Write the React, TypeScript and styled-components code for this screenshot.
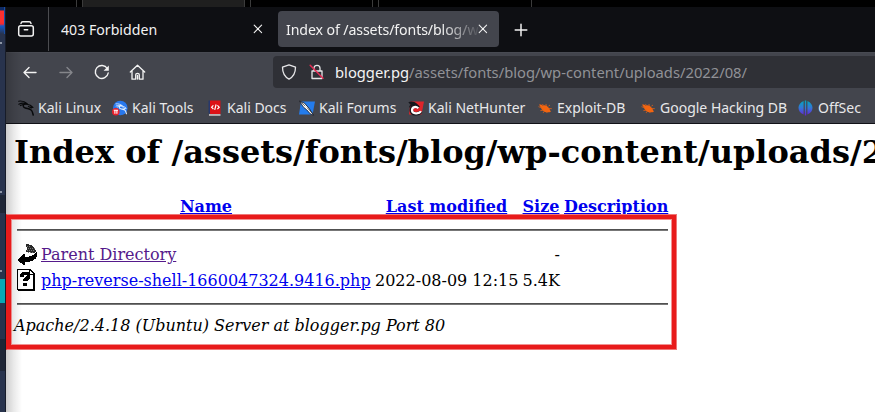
import React from "react";
import styled, { createGlobalStyle } from "styled-components";

const GlobalStyle = createGlobalStyle`
  * { box-sizing: border-box; }
  html, body { margin: 0; padding: 0; overflow: hidden; background: #000; }
`;

const Desktop = styled.div`
  width: 875px;
  height: 412px;
  display: grid;
  grid-template-rows: 7px 405px;
  overflow: hidden;
  background: #000;
`;

const Panel = styled.div`
  display: flex;
  background: #000;
`;

const PanelCell = styled.div<{ $w: number; $active?: boolean }>`
  width: ${(p) => p.$w}px;
  flex: none;
  border-right: 1px solid #3b3b3b;
  background: ${(p) => (p.$active ? "#1f1f1f" : "#000")};
`;

const Workspace = styled.div`
  display: grid;
  grid-template-columns: 6px 869px;
  min-height: 0;
`;

const Behind = styled.div`
  display: flex;
  flex-direction: column;
  background: #28334d;
  border-right: 1px solid #171c29;
  overflow: hidden;
`;

const Strip = styled.div<{ $h: number; $c?: string }>`
  height: ${(p) => p.$h}px;
  flex: none;
  background: ${(p) => p.$c ?? "transparent"};
`;

const RedGlow = styled.div`
  height: 27px;
  flex: none;
  border-right: 4px solid #164fa8;
  border-right-width: 1px;
  background: linear-gradient(#102a63 0 3px, #fa3030 4px 15px, #f02a32 17px, #1458c8 19px, #28334d 27px);
`;

const Tick = styled.div`
  width: 2px;
  height: 2px;
  flex: none;
  background: #8d96a6;
`;

const Browser = styled.div`
  position: relative;
  display: grid;
  grid-template-rows: 45px 71px 1px 288px;
  min-width: 0;
  overflow: hidden;
  background: #fff;
`;

const EdgeShadow = styled.div`
  position: absolute;
  left: 0;
  top: 45px;
  bottom: 0;
  width: 16px;
  pointer-events: none;
  background: linear-gradient(90deg, rgba(0, 0, 0, 0.2), rgba(0, 0, 0, 0.09) 45%, rgba(0, 0, 0, 0));
`;

const TabBar = styled.div`
  display: flex;
  background: #0e0f13;
  color: #f2f2f2;
  font: 14.15px/20px "Noto Sans", sans-serif;
`;

const ViewButton = styled.div`
  width: 43px;
  height: 44px;
  padding: 13px 0 0 11px;
  border-right: 1px solid #4b4c50;
`;

const Tab = styled.div<{ $active?: boolean }>`
  display: flex;
  align-items: center;
  width: ${(p) => (p.$active ? 221 : 217)}px;
  height: 36px;
  margin: 4px 0 0 ${(p) => (p.$active ? 12 : 0)}px;
  padding: ${(p) => (p.$active ? "0 8px 0 8px" : "0 0 0 12px")};
  border-radius: 4px;
  background: ${(p) => (p.$active ? "#43454d" : "transparent")};
`;

const TabTitle = styled.span<{ $fade?: boolean }>`
  width: ${(p) => (p.$fade ? 192 : 192)}px;
  flex: none;
  padding-top: 2px;
  overflow: hidden;
  white-space: nowrap;
  letter-spacing: ${(p) => (p.$fade ? "-0.1px" : "0")};
  ${(p) => p.$fade && "mask-image: linear-gradient(90deg, #000 155px, transparent 195px);"}
`;

const NewTab = styled.div`
  padding: 15px 0 0 15px;
`;

const Chrome = styled.div`
  background: #43454d;
  border-top: 1px solid #484a52;
  overflow: hidden;
`;

const Nav = styled.div`
  display: flex;
  height: 39px;
  padding-top: 3px;
`;

const NavButton = styled.div<{ $w: number; $dim?: boolean }>`
  width: ${(p) => p.$w}px;
  padding-top: 8px;
  flex: none;
  color: ${(p) => (p.$dim ? "#85868b" : "#f3f3f3")};
`;

const AddressBar = styled.div`
  display: flex;
  flex: 1;
  height: 32px;
  padding-left: 8px;
  border-radius: 4px 0 0 4px;
  background: #2f3036;
  color: #919297;
  font: 14.75px/32px "Noto Sans", sans-serif;
  white-space: nowrap;
`;

const AddressIcon = styled.span<{ $w: number }>`
  width: ${(p) => p.$w}px;
  padding-top: 8px;
  line-height: 0;
  flex: none;
  color: #e6e6e8;
`;

const Host = styled.span`
  color: #f3f3f3;
`;

const Bookmarks = styled.div`
  display: flex;
  padding-left: 12px;
  height: 31px;
  color: #e8e8ea;
  font: 14px/31px "Noto Sans", sans-serif;
  white-space: nowrap;
`;

const Bookmark = styled.div<{ $w: number }>`
  display: flex;
  width: ${(p) => p.$w}px;
  flex: none;
  gap: 4px;
  svg { flex: none; margin-top: 8px; }
`;

const Divider = styled.div`
  background: #111217;
`;

const Page = styled.main`
  position: relative;
  padding-left: 8px;
  color: #000;
  background: #fff;
  font: 16px/20px "DejaVu Serif", serif;
  overflow: hidden;
`;

const Heading = styled.h1`
  margin: 9px 0 24px;
  font-size: 32px;
  line-height: 38px;
  white-space: nowrap;
`;

const Listing = styled.div`
  display: grid;
  width: 651px;
  margin-left: 3px;
  grid-template-columns: 20px 330px 143px 38px 104px;
  column-gap: 4px;
  grid-template-rows: 22px 25px 26px 26px 21px;
  white-space: nowrap;
`;

const HeadCell = styled.div`
  padding-top: 2px;
  text-align: center;
  font-weight: bold;
`;

const Cell = styled.div<{ $right?: boolean }>`
  padding-top: 2px;
  text-align: ${(p) => (p.$right ? "right" : "left")};
  line-height: 22px;
  svg { display: block; margin-top: -1px; }
`;

const Rule = styled.hr<{ $top: number }>`
  grid-column: 1 / -1;
  width: 100%;
  height: 2px;
  margin: ${(p) => p.$top}px 0 0;
  border: 0;
  border-top: 1px solid #505050;
  border-bottom: 1px solid #777;
`;

const Link = styled.a<{ $visited?: boolean }>`
  color: ${(p) => (p.$visited ? "#551a8b" : "#0000ee")};
  text-decoration: underline;
`;

const Address = styled.address`
  margin-top: 1px;
  line-height: 20px;
`;

const Highlight = styled.div`
  position: absolute;
  left: 0;
  top: 207px;
  width: 671px;
  height: 136px;
  border: 1px solid #ef7777;
  border-left-color: #e81b1b;
  box-shadow: inset 0 0 0 4px #e81b1b, inset 0 0 0 5px rgba(239, 119, 119, 0.8);
  pointer-events: none;
`;

const Line = ({ w = 16, h = 16, children }: { w?: number; h?: number; children: React.ReactNode }) => (
  <svg width={w} height={h} viewBox={`0 0 ${w} ${h}`} fill="none" stroke="currentColor" strokeWidth="1.3" strokeLinecap="round" strokeLinejoin="round">
    {children}
  </svg>
);

const CloseIcon = () => (
  <Line w={10} h={10}><path d="M1.2 1.2l7.4 7.4M8.6 1.2L1.2 8.6" strokeWidth="1.1" /></Line>
);

const Dragon = ({ color }: { color: string }) => (
  <g fill="none" stroke={color} strokeLinecap="round" strokeLinejoin="round">
    <path d="M.6 1.2c3-.4 6.200.2 8.600 2.400M.8 4.200c2.800-1.400 5.600-1.400 8.400-.3M2.400 5.600c2-1 4.400-1.400 6.600-1.300" strokeWidth="1.100" />
    <path d="M7 3.500c-2.500 1-2.400 3.700.2 4.500 2.300.8 4.700.4 6.300 2.400 1 1.200 1.200 2.500 1.700 4.600" strokeWidth="1.500" />
    <path d="M9 4.200l3.300 1.100 2.700 2.200-2.300-.4.700.900-3-1.500" strokeWidth="1.100" />
  </g>
);

const KaliIcon = () => <svg width="16" height="16" viewBox="0 0 16 16"><Dragon color="#08090b" /></svg>;

const ToolsIcon = () => (
  <svg width="16" height="16" viewBox="0 0 16 16">
    <circle cx="8.300" cy="8" r="7.300" fill="#2878ed" />
    <g transform="translate(3.500 3) scale(.72)"><Dragon color="#e8f2ff" /></g>
    <circle cx="3.800" cy="11.700" r="3.800" fill="#e9202b" />
    <path d="M1.700 10.300h4.300M2.900 10.300v3.400M4.900 10.300v3.400" stroke="#fff" strokeWidth="1.100" fill="none" />
  </svg>
);

const DocsIcon = () => (
  <svg width="16" height="16" viewBox="0 0 16 16">
    <path d="M1.500.5h2v13h-2z" fill="#27386c" />
    <path d="M3 .5h10.500v13.500H3z" fill="#dc1117" />
    <path d="M2 14.200h11.500v1.500H2z" fill="#d8cfd0" />
    <path d="M6.400 5.300L4.600 7.200l1.800 1.900M10.400 5.300l1.800 1.900-1.800 1.900M9.100 4.500L7.700 9.900" stroke="#fff" strokeWidth="1.200" fill="none" />
  </svg>
);

const ForumsIcon = () => (
  <svg width="16" height="16" viewBox="0 0 16 16">
    <path d="M2 1.500h14l-2.500 13H0z" fill="#247cec" />
    <path d="M.5 1l5 2.200 4.600 5.200 4.500 6.800-3.300-1.400-3.600-4-3.500-2.900z" fill="#fff" stroke="#10131b" strokeWidth=".8" />
    <path d="M1 1.200l5.300 5M8 7.500l5 5.500" stroke="#31343b" strokeWidth=".7" />
  </svg>
);

const HunterIcon = () => (
  <svg width="16" height="16" viewBox="0 0 16 16">
    <path d="M2.500 1.500H16l-2.500 13H1z" fill="#df252b" />
    <path d="M.3 2.300c3-1.300 6-.8 8.700 1.500l2 2.200-3-.6C4.500 4.500 2.500 6.500 1 8c0-1.500.5-2.500 1.500-3.300z" fill="#15171c" />
    <path d="M12.800 11.700c-1.700 3-9.500 3.200-9.500-1.500 0-4.100 5.200-5.200 7.200-2.400" fill="none" stroke="#15171c" strokeWidth="3.500" />
    <path d="M13 11.300c-1.700 2.800-9 2.900-9-1.100C4 6.700 8 6 10.300 8.300" fill="none" stroke="#fff" strokeWidth="2.200" />
  </svg>
);

const ExploitIcon = () => (
  <svg width="16" height="16" viewBox="0 0 16 16">
    <path d="M2 4.500c1.300-.2 3 .2 4 1.200 1.500-1.500 5.200.5 6.500 3.400l1.400 2.600c-2 .9-6.200.9-8-1C4.300 9.200 4 7.500 2 4.500z" fill="#f36510" />
    <path d="M1.500 6.700l3 1M5.400 4l1.400 2M9 4l.2 2M11.500 6l1.500-.9M12 8.500l2.800.2M3.400 10.600l3-.5M6 13l1.200-1.600M10 13l-.2-1.300" stroke="#cf5d1d" fill="none" strokeWidth=".9" />
  </svg>
);

const OffSecIcon = () => (
  <svg width="16" height="16" viewBox="0 0 16 16">
    <defs><linearGradient id="offsec" x1="0" y1="0" x2="0" y2="1"><stop stopColor="#00a9bd" /><stop offset=".5" stopColor="#3476d8" /><stop offset="1" stopColor="#6820d7" /></linearGradient></defs>
    <path d="M5.600 1v13.600C-1.200 11.800-1.200 3.800 5.600 1zM9.400 1v13.600C16.200 11.800 16.200 3.800 9.400 1zM6.800.5h1.400v15H6.800z" fill="url(#offsec)" />
  </svg>
);

const BackIcon = () => (
  <svg width="20" height="24" viewBox="0 0 20 24" shapeRendering="crispEdges">
    <path d="M9 1h2l1 1h2l4 3 1 3-1 2h-3l-3-1H9V7h1V4H9z" fill="#292929" />
    <path d="M10 3h4M11 5h7M10 7h8M11 9h6" stroke="#777" strokeWidth="1" strokeDasharray="1 1" />
    <path d="M0 17l7-6h1v3c5 0 8-1 11-5h1v4c-1 4-6 6-12 6v3H7z" fill="#000" />
  </svg>
);

const UnknownIcon = () => (
  <svg width="20" height="22" viewBox="0 0 20 22" shapeRendering="crispEdges">
    <path d="M0 0h13l5 5v17H1v-1H0z" fill="#000" />
    <path d="M1 1h11v5h4v14H1z" fill="#fff" />
    <path d="M13 2l3 3h-3z" fill="#fff" />
    <path d="M3 5l2-2h6l2 2v4l-3 3H6v-2l4-3V6H7v2H3zM6 14h4v3H6z" fill="#000" />
  </svg>
);

const bookmarks = [
  { label: "Kali Linux", w: 94, icon: <KaliIcon /> },
  { label: "Kali Tools", w: 95, icon: <ToolsIcon /> },
  { label: "Kali Docs", w: 92, icon: <DocsIcon /> },
  { label: "Kali Forums", w: 109, icon: <ForumsIcon /> },
  { label: "Kali NetHunter", w: 129, icon: <HunterIcon /> },
  { label: "Exploit-DB", w: 103, icon: <ExploitIcon /> },
  { label: "Google Hacking DB", w: 158, icon: <ExploitIcon /> },
  { label: "OffSec", w: 70, icon: <OffSecIcon /> },
];

export default function App() {
  return (
    <>
      <GlobalStyle />
      <Desktop>
        <Panel>
          <PanelCell $w={77} /><PanelCell $w={6} /><PanelCell $w={162} $active />
          <PanelCell $w={6} /><PanelCell $w={122} /><PanelCell $w={6} /><PanelCell $w={153} />
        </Panel>
        <Workspace>
          <Behind>
            <RedGlow />
            <Strip $h={8} /><Tick /><Strip $h={147} /><Tick />
            <Strip $h={2} /><Strip $h={18} $c="#1e2636" />
            <Strip $h={57} /><Tick /><Strip $h={7} />
            <Strip $h={24} $c="#08a9b5" /><Strip $h={36} />
            <Strip $h={32} $c="#1e2636" />
          </Behind>
          <Browser>
            <TabBar>
              <ViewButton>
                <Line w={18} h={18}>
                  <rect x="1.700" y="5.700" width="14.600" height="10.300" rx="2" strokeWidth="1.500" />
                  <path d="M4 3.500c.2-1.200.8-1.700 1.800-1.700h6.400c1 0 1.600.5 1.800 1.700M7.300 9.700h3.400" strokeWidth="1.500" />
                </Line>
              </ViewButton>
              <Tab><TabTitle>403 Forbidden</TabTitle><CloseIcon /></Tab>
              <Tab $active><TabTitle $fade>Index of /assets/fonts/blog/wp-content</TabTitle><CloseIcon /></Tab>
              <NewTab><Line w={14} h={14}><path d="M7 1.200v11.600M1.200 7h11.600" strokeWidth="1.500" /></Line></NewTab>
            </TabBar>
            <Chrome>
              <Nav>
                <NavButton $w={53}><Line w={38} h={17}><path d="M18 8.500h12M18 8.500l5-5M18 8.500l5 5" strokeWidth="1.400" /></Line></NavButton>
                <NavButton $w={34} $dim><Line w={20} h={17}><path d="M1 8.500h12M8 3.500l5 5-5 5" strokeWidth="1.400" /></Line></NavButton>
                <NavButton $w={36}><Line w={18} h={17}><path d="M14.300 4.500A6.500 6.500 0 1 0 15.200 9" strokeWidth="1.400" /><path d="M15.800 1.500v5.200h-5.200z" fill="currentColor" stroke="none" /></Line></NavButton>
                <NavButton $w={144}><Line w={18} h={17}><path d="M1.300 8L8.500 1.300 15.700 8M3 6.800v8.400h3.700v-4.400c0-1 .5-1.400 1.800-1.400s1.800.4 1.800 1.400v4.400H14V6.800M8.500 11.500v3.500" /></Line></NavButton>
                <AddressBar>
                  <AddressIcon $w={28}><Line w={16} h={16}><path d="M8 .8l6.500 2.400c0 5.800-1.700 9.300-6.500 11.900C3.200 12.500 1.500 9 1.500 3.200z" /></Line></AddressIcon>
                  <AddressIcon $w={26}><Line w={16} h={16}><path d="M5 7V4.300c0-4 6-4 6 0V7M3 7h10v7.500H3z" /><path d="M1.200 1.200L14 14.200" stroke="#e62b54" strokeWidth="1.500" /></Line></AddressIcon>
                  <span><Host>blogger.pg</Host>/assets/fonts/blog/wp-content/uploads/2022/08/</span>
                </AddressBar>
              </Nav>
              <Bookmarks>
                {bookmarks.map((b) => <Bookmark key={b.label} $w={b.w}>{b.icon}<span>{b.label}</span></Bookmark>)}
              </Bookmarks>
            </Chrome>
            <Divider />
            <Page>
              <Heading>Index of /assets/fonts/blog/wp-content/uploads/2022/08</Heading>
              <Listing>
                <HeadCell />
                <HeadCell><Link>Name</Link></HeadCell>
                <HeadCell><Link>Last modified</Link></HeadCell>
                <HeadCell><Link>Size</Link></HeadCell>
                <HeadCell><Link>Description</Link></HeadCell>
                <Rule $top={12} />
                <Cell><BackIcon /></Cell>
                <Cell><Link $visited>Parent Directory</Link></Cell>
                <Cell /><Cell $right>-</Cell><Cell />
                <Cell><UnknownIcon /></Cell>
                <Cell><Link>php-reverse-shell-1660047324.9416.php</Link></Cell>
                <Cell>2022-08-09 12:15</Cell><Cell $right>5.4K</Cell><Cell />
                <Rule $top={9} />
              </Listing>
              <Address>Apache/2.4.18 (Ubuntu) Server at blogger.pg Port 80</Address>
            </Page>
            <EdgeShadow />
            <Highlight />
          </Browser>
        </Workspace>
      </Desktop>
    </>
  );
}
